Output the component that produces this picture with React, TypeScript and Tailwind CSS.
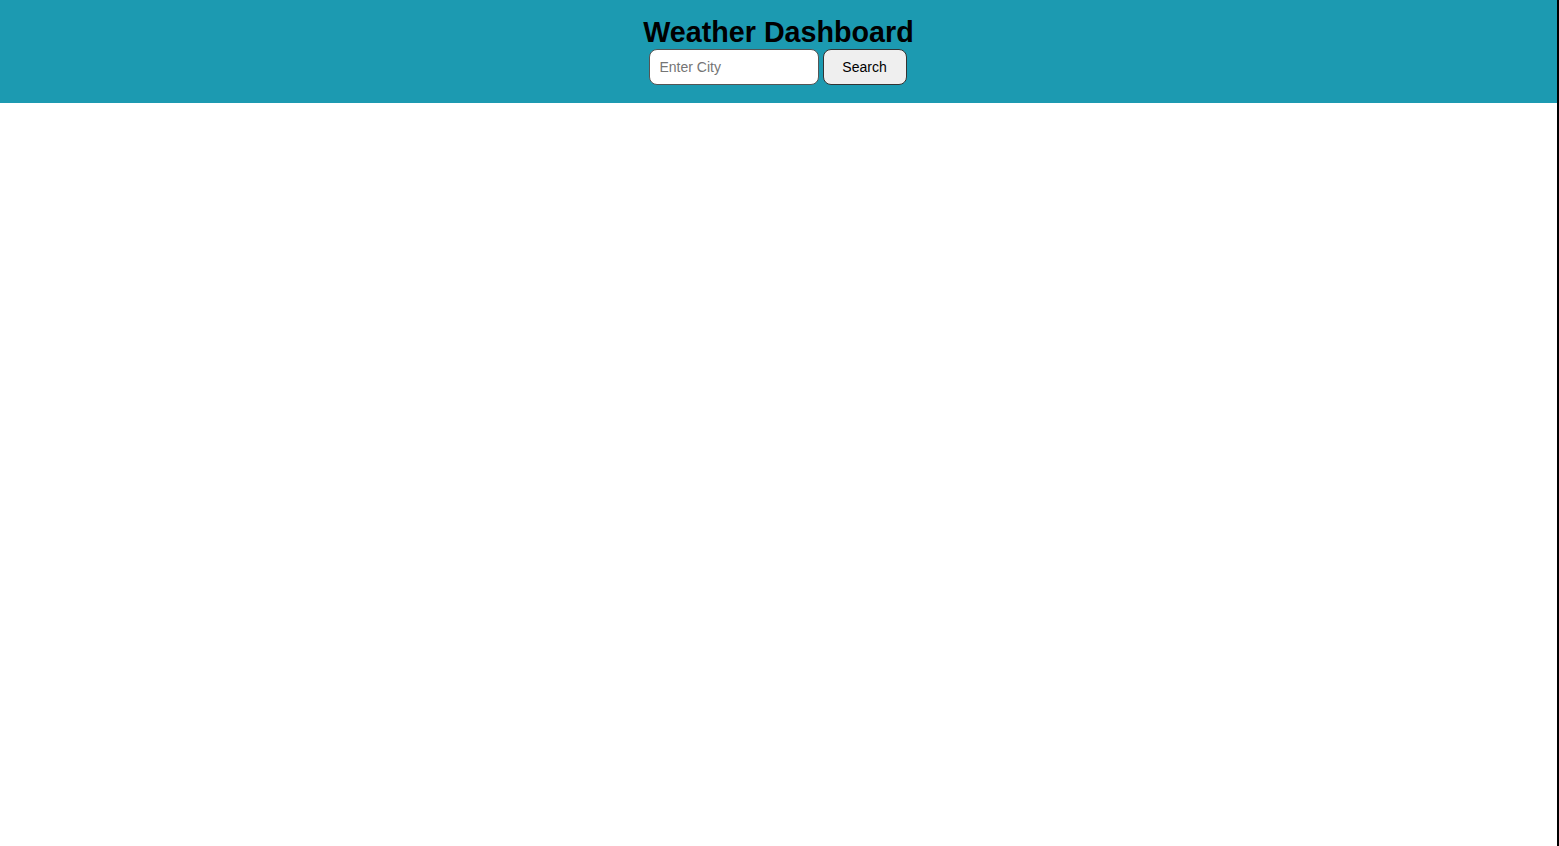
import { useState } from 'react';

export default function App() {
  const [city, setCity] = useState('');

  return (
    <div className="min-h-[846px] w-full bg-white border-r-2 border-black font-['Liberation_Sans',Arial,sans-serif]">
      <header className="bg-[#1c9ab1] pt-[17px] pb-[18px] flex flex-col items-center">
        <h1 className="text-[28.7px] leading-[30px] font-bold text-black">Weather Dashboard</h1>
        <form
          className="mt-[2px] mr-[2px] flex items-center gap-[4px]"
          onSubmit={(e) => e.preventDefault()}
        >
          <input
            type="text"
            value={city}
            onChange={(e) => setCity(e.target.value)}
            placeholder="Enter City"
            className="w-[170px] h-[36px] px-[10px] rounded-[8px] border border-[#555] bg-white text-[14px] text-black placeholder:text-[#757575] outline-none"
          />
          <button
            type="submit"
            className="w-[84px] h-[36px] rounded-[8px] border border-[#333] bg-[#efefef] text-[14px] text-black"
          >
            Search
          </button>
        </form>
      </header>
    </div>
  );
}
